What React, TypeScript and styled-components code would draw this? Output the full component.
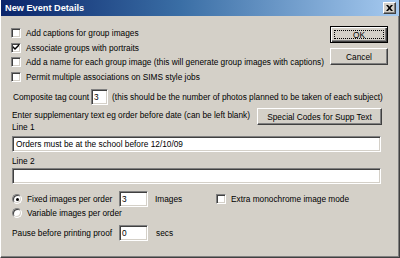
import React from 'react';
import styled, { createGlobalStyle } from 'styled-components';

const Global = createGlobalStyle`
  html, body { margin: 0; padding: 0; background: #d4d0c8; }
  body { font-family: "Liberation Sans", Arial, sans-serif; }
  * { box-sizing: border-box; }
`;

const Window = styled.div`
  width: 400px;
  height: 258px;
  background: #d4d0c8;
  border-left: 1px solid #ffffff;
  border-right: 1px solid #404040;
  border-bottom: 1px solid #404040;
  box-shadow: inset -1px 0 0 #808080, inset 0 -1px 0 #808080;
  display: flex;
  flex-direction: column;
  font-size: 8.3px;
  color: #000;
  overflow: hidden;
`;

const TitleBar = styled.div`
  height: 16px;
  flex: none;
  background: linear-gradient(to right, #0a246a 0%, #3a6ea5 45%, #a6caf0 100%);
  display: flex;
  align-items: center;
  justify-content: space-between;
  padding: 0 3px 0 4px;
`;

const Title = styled.span`
  color: #fff;
  font-weight: bold;
  font-size: 9.2px;
`;

const CloseBtn = styled.div`
  width: 13px;
  height: 12px;
  background: #d4d0c8;
  border-top: 1px solid #fff;
  border-left: 1px solid #fff;
  border-right: 1px solid #404040;
  border-bottom: 1px solid #404040;
  box-shadow: inset -1px -1px 0 #808080;
  display: flex;
  align-items: center;
  justify-content: center;
`;

const Body = styled.div`
  flex: 1;
  display: flex;
  flex-direction: column;
  padding: 10px 11px 0 10px;
`;

const TopSection = styled.div`
  display: flex;
  justify-content: space-between;
  align-items: flex-start;
`;

const CheckList = styled.div`
  display: flex;
  flex-direction: column;
`;

const CheckRow = styled.label`
  height: 14.5px;
  display: flex;
  align-items: center;
  gap: 5px;
  white-space: nowrap;
`;

const Box = styled.span`
  width: 10px;
  height: 10px;
  flex: none;
  background: #fff;
  border-top: 1px solid #808080;
  border-left: 1px solid #808080;
  border-right: 1px solid #fff;
  border-bottom: 1px solid #fff;
  box-shadow: inset 1px 1px 0 #404040, inset -1px -1px 0 #d4d0c8;
  display: flex;
  align-items: center;
  justify-content: center;
`;

const Radio = styled.span<{ $on?: boolean }>`
  width: 10px;
  height: 10px;
  flex: none;
  border-radius: 50%;
  background: #fff;
  border: 1px solid;
  border-color: #808080 #fff #fff #808080;
  box-shadow: inset 1px 1px 0 #404040, inset -1px -1px 0 #d4d0c8;
  display: flex;
  align-items: center;
  justify-content: center;
  &::after {
    content: '';
    width: 3px;
    height: 3px;
    border-radius: 50%;
    background: ${p => (p.$on ? '#000' : 'transparent')};
  }
`;

const ButtonCol = styled.div`
  display: flex;
  flex-direction: column;
  gap: 5px;
`;

const Button = styled.button<{ $w: number; $default?: boolean }>`
  width: ${p => p.$w}px;
  height: 17px;
  font-family: inherit;
  font-size: 8.3px;
  color: #000;
  background: #d4d0c8;
  padding: 0;
  margin: 0;
  border: 1px solid;
  border-color: ${p => (p.$default ? '#000' : '#fff #404040 #404040 #fff')};
  box-shadow: ${p =>
    p.$default
      ? 'inset 1px 1px 0 #fff, inset -1px -1px 0 #404040, inset -2px -2px 0 #808080'
      : 'inset -1px -1px 0 #808080'};
  position: relative;
  cursor: default;
`;

const FocusRing = styled.span`
  position: absolute;
  inset: 3px;
  border: 1px dotted #000;
`;

const Row = styled.div<{ $mt: number; $h: number }>`
  display: flex;
  align-items: center;
  margin-top: ${p => p.$mt}px;
  height: ${p => p.$h}px;
  white-space: nowrap;
  padding-left: 1px;
`;

const Field = styled.div<{ $w: number }>`
  width: ${p => p.$w}px;
  height: 16px;
  flex: none;
  background: #fff;
  border-top: 1px solid #808080;
  border-left: 1px solid #808080;
  border-right: 1px solid #fff;
  border-bottom: 1px solid #fff;
  box-shadow: inset 1px 1px 0 #404040, inset -1px -1px 0 #d4d0c8;
  padding: 0 2px;
  display: flex;
  align-items: center;
`;

const WideField = styled(Field)`
  width: 369px;
  padding-left: 3px;
`;

const Lower = styled.div`
  display: flex;
  flex-direction: column;
  padding-left: 1px;
`;

const SuppGrid = styled.div`
  display: flex;
  justify-content: space-between;
  align-items: flex-start;
  margin-top: 3px;
  width: 370px;
`;

const TextStack = styled.div`
  display: flex;
  flex-direction: column;
  padding-top: 1px;
  line-height: 12px;
  white-space: nowrap;
`;

const Label = styled.div<{ $mt: number }>`
  line-height: 12px;
  margin-top: ${p => p.$mt}px;
`;

const FormGrid = styled.div<{ $mt: number }>`
  display: grid;
  grid-template-columns: 107px 29px 68px auto;
  align-items: center;
  margin-top: ${p => p.$mt}px;
  white-space: nowrap;
`;

const Cell = styled.div<{ $h?: number; $pl?: number }>`
  display: flex;
  align-items: center;
  gap: 5px;
  height: ${p => p.$h ?? 16}px;
  padding-left: ${p => p.$pl ?? 0}px;
`;

const Check = ({ on }: { on?: boolean }) => (
  <Box>
    {on && (
      <svg width="7" height="7" viewBox="0 0 7 7">
        <path d="M0 2 L2 4 L6 0 L6 2 L2 6 L0 4 Z" fill="#000" />
      </svg>
    )}
  </Box>
);

export default function App() {
  return (
    <>
      <Global />
      <Window>
        <TitleBar>
          <Title>New Event Details</Title>
          <CloseBtn>
            <svg width="7" height="6" viewBox="0 0 7 6">
              <path d="M0 0 L2 0 L3.5 1.8 L5 0 L7 0 L4.5 3 L7 6 L5 6 L3.5 4.2 L2 6 L0 6 L2.5 3 Z" fill="#000" />
            </svg>
          </CloseBtn>
        </TitleBar>
        <Body>
          <TopSection>
            <CheckList>
              <CheckRow><Check />Add captions for group images</CheckRow>
              <CheckRow><Check on />Associate groups with portraits</CheckRow>
              <CheckRow><Check />Add a name for each group image (this will generate group images with captions)</CheckRow>
              <CheckRow><Check />Permit multiple associations on SIMS style jobs</CheckRow>
            </CheckList>
            <ButtonCol>
              <Button $w={58} $default>OK<FocusRing /></Button>
              <Button $w={58}>Cancel</Button>
            </ButtonCol>
          </TopSection>
          <Lower>
            <Row $mt={5} $h={16}>
              Composite tag count
              <Field $w={17} style={{ marginLeft: 2, marginRight: 4 }}>3</Field>
              (this should be the number of photos planned to be taken of each subject)
            </Row>
            <SuppGrid>
              <TextStack>
                <span>Enter supplementary text eg order before date (can be left blank)</span>
                <span>Line 1</span>
              </TextStack>
              <Button $w={125}>Special Codes for Supp Text</Button>
            </SuppGrid>
            <WideField style={{ marginTop: 3 }}>Orders must be at the school before 12/10/09</WideField>
            <Label $mt={3}>Line 2</Label>
            <WideField style={{ marginTop: 1 }} />
            <FormGrid $mt={7}>
              <Cell><Radio $on />Fixed images per order</Cell>
              <Field $w={29}>3</Field>
              <Cell $pl={7}>Images</Cell>
              <Cell><Check />Extra monochrome image mode</Cell>
              <Cell $h={12}><Radio />Variable images per order</Cell>
            </FormGrid>
            <FormGrid $mt={6}>
              <Cell>Pause before printing proof</Cell>
              <Field $w={29}>0</Field>
              <Cell $pl={8}>secs</Cell>
            </FormGrid>
          </Lower>
        </Body>
      </Window>
    </>
  );
}
